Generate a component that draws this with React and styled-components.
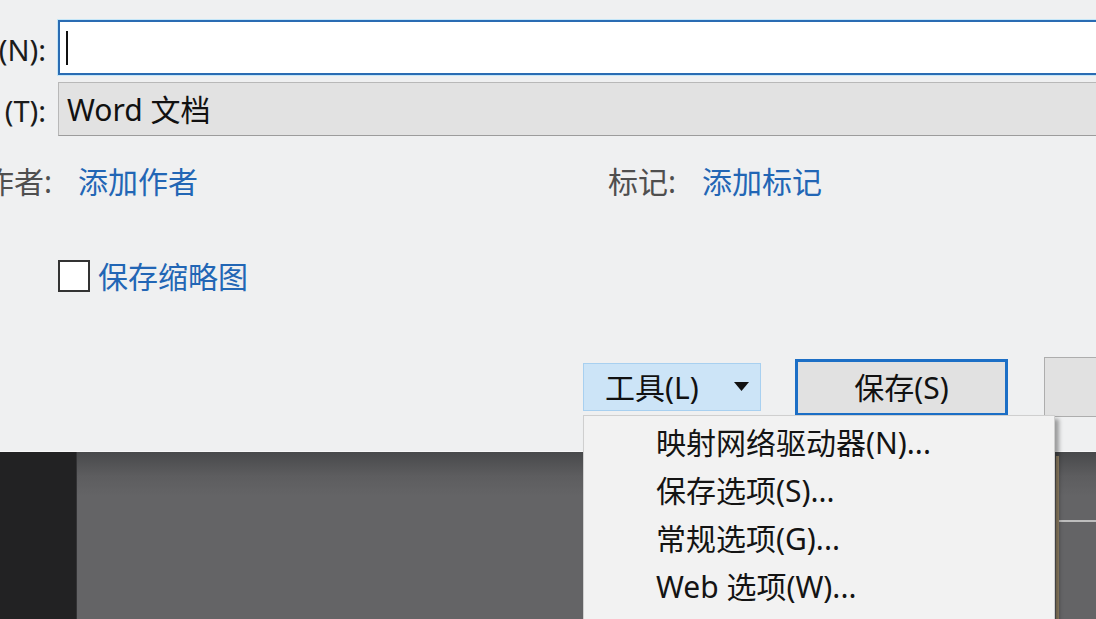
import styled, { createGlobalStyle } from 'styled-components';

const FONT = `"Noto Sans", "Noto Sans CJK SC", sans-serif`;

const GlobalStyle = createGlobalStyle`
  html, body {
    margin: 0;
    padding: 0;
  }
  body {
    width: 1096px;
    height: 619px;
    overflow: hidden;
    font-family: ${FONT};
    background: #646466;
  }
`;

const menuItems = ['映射网络驱动器(N)...', '保存选项(S)...', '常规选项(G)...', 'Web 选项(W)...'];

export default function App() {
  return (
    <>
      <GlobalStyle />
      <Page>
        <Dialog>
          <FieldGrid>
            <Label>文件名(N):</Label>
            <TextInput>
              <Caret />
            </TextInput>
            <Label>保存类型 (T):</Label>
            <Select>Word 文档</Select>
          </FieldGrid>

          <MetaRow>
            <MetaGroup>
              <MetaLabel width={52}>作者:</MetaLabel>
              <LinkText>添加作者</LinkText>
            </MetaGroup>
            <MetaGroup>
              <MetaLabel>标记:</MetaLabel>
              <LinkText>添加标记</LinkText>
            </MetaGroup>
          </MetaRow>

          <CheckRow>
            <CheckBox />
            <LinkText>保存缩略图</LinkText>
          </CheckRow>

          <ButtonRow>
            <ToolWrap>
              <ToolButton>
                工具(L)
                <svg width="15" height="9" viewBox="0 0 15 9">
                  <path d="M0 0 H15 L7.5 9 Z" fill="#111" />
                </svg>
              </ToolButton>
              <Menu>
                {menuItems.map((item) => (
                  <MenuItem key={item}>{item}</MenuItem>
                ))}
              </Menu>
            </ToolWrap>
            <Button primary>保存(S)</Button>
            <Button>取消</Button>
          </ButtonRow>
        </Dialog>

        <Backdrop>
          <DarkStrip />
          <Workspace>
            <PageEdge />
          </Workspace>
        </Backdrop>
      </Page>
    </>
  );
}

const Page = styled.div`
  display: flex;
  flex-direction: column;
  height: 619px;
  overflow: hidden;
`;

const Dialog = styled.div`
  height: 452px;
  flex-shrink: 0;
  box-sizing: border-box;
  padding-top: 20px;
  background: #eff0f1;
  border-bottom: 1px solid #f8f8f8;
  display: flex;
  flex-direction: column;
  position: relative;
  z-index: 1;
`;

const FieldGrid = styled.div`
  display: grid;
  grid-template-columns: 46px 1fr;
  grid-template-rows: 55px 54px;
  column-gap: 12px;
  row-gap: 7px;
  margin-right: -12px;
`;

const Label = styled.div`
  display: flex;
  justify-content: flex-end;
  align-items: center;
  overflow: hidden;
  white-space: nowrap;
  font-size: 29px;
  color: #1b1b1b;
`;

const TextInput = styled.div`
  box-sizing: border-box;
  display: flex;
  align-items: center;
  padding-left: 6px;
  background: #fff;
  border: 2px solid #2a6cb3;
  box-shadow: 0 0 0 1px #c4e6f8;
`;

const Caret = styled.span`
  width: 2px;
  height: 34px;
  background: #111;
`;

const Select = styled.div`
  box-sizing: border-box;
  display: flex;
  align-items: center;
  padding-left: 8px;
  padding-bottom: 2px;
  background: #e2e2e2;
  border: 1px solid #b8b8b8;
  border-bottom-color: #9c9c9c;
  font-size: 30px;
  color: #111;
`;

const MetaRow = styled.div`
  display: flex;
  align-items: center;
  height: 44px;
  margin-top: 22px;
`;

const MetaGroup = styled.div`
  display: flex;
  align-items: center;
  gap: 26px;
  &:first-child {
    width: 608px;
  }
`;

const MetaLabel = styled.div`
  display: flex;
  justify-content: flex-end;
  overflow: hidden;
  white-space: nowrap;
  width: ${({ width }) => (width ? `${width}px` : 'auto')};
  font-size: 30px;
  color: #4f4f4f;
`;

const LinkText = styled.span`
  font-size: 30px;
  color: #2266b5;
  white-space: nowrap;
`;

const CheckRow = styled.div`
  display: flex;
  align-items: center;
  gap: 8px;
  height: 40px;
  margin-top: 53px;
  padding-left: 58px;
`;

const CheckBox = styled.span`
  box-sizing: border-box;
  width: 32px;
  height: 32px;
  margin-top: 2px;
  background: #fff;
  border: 2px solid #333;
`;

const ButtonRow = styled.div`
  display: flex;
  align-items: center;
  height: 60px;
  margin-top: 62px;
  padding-left: 583px;
  gap: 34px;
`;

const ToolWrap = styled.div`
  position: relative;
`;

const ToolButton = styled.div`
  box-sizing: border-box;
  width: 178px;
  height: 48px;
  display: flex;
  align-items: center;
  justify-content: space-between;
  padding: 0 11px 2px 21px;
  background: #cce4f7;
  border: 1px solid #a8d0f0;
  font-size: 30px;
  color: #111;
`;

const Button = styled.div`
  box-sizing: border-box;
  flex-shrink: 0;
  width: 213px;
  height: ${({ primary }) => (primary ? '57px' : '60px')};
  display: flex;
  align-items: center;
  justify-content: center;
  padding-bottom: 2px;
  background: #e1e1e1;
  border: ${({ primary }) => (primary ? '3px solid #1c6fc6' : '1px solid #adadad')};
  font-size: 30px;
  color: #111;
  & + & {
    margin-left: 2px;
  }
`;

const Menu = styled.div`
  position: absolute;
  top: calc(100% + 4px);
  left: 0;
  width: 472px;
  height: 230px;
  box-sizing: border-box;
  padding-top: 1px;
  background: #f2f2f2;
  border: 1px solid #cfcfcf;
  box-shadow: 4px 4px 4px rgba(0, 0, 0, 0.35);
  z-index: 5;
`;

const MenuItem = styled.div`
  height: 48px;
  display: flex;
  align-items: center;
  padding-left: 72px;
  font-size: 30px;
  color: #141414;
  white-space: nowrap;
`;

const Backdrop = styled.div`
  flex: 1;
  display: flex;
`;

const DarkStrip = styled.div`
  width: 76px;
  background: #222223;
  border-right: 1px solid #333335;
`;

const Workspace = styled.div`
  flex: 1;
  display: flex;
  justify-content: flex-end;
  background: linear-gradient(#48494b 0px, #5d5d5f 24px, #646466 44px, #646466 100%);
`;

const PageEdge = styled.div`
  width: 37px;
  margin-top: 4px;
  border-left: 3px solid #9d8b6d;
  background: linear-gradient(
    transparent 0,
    transparent 64px,
    #bdbdbd 64px,
    #bdbdbd 66px,
    transparent 66px
  );
`;
